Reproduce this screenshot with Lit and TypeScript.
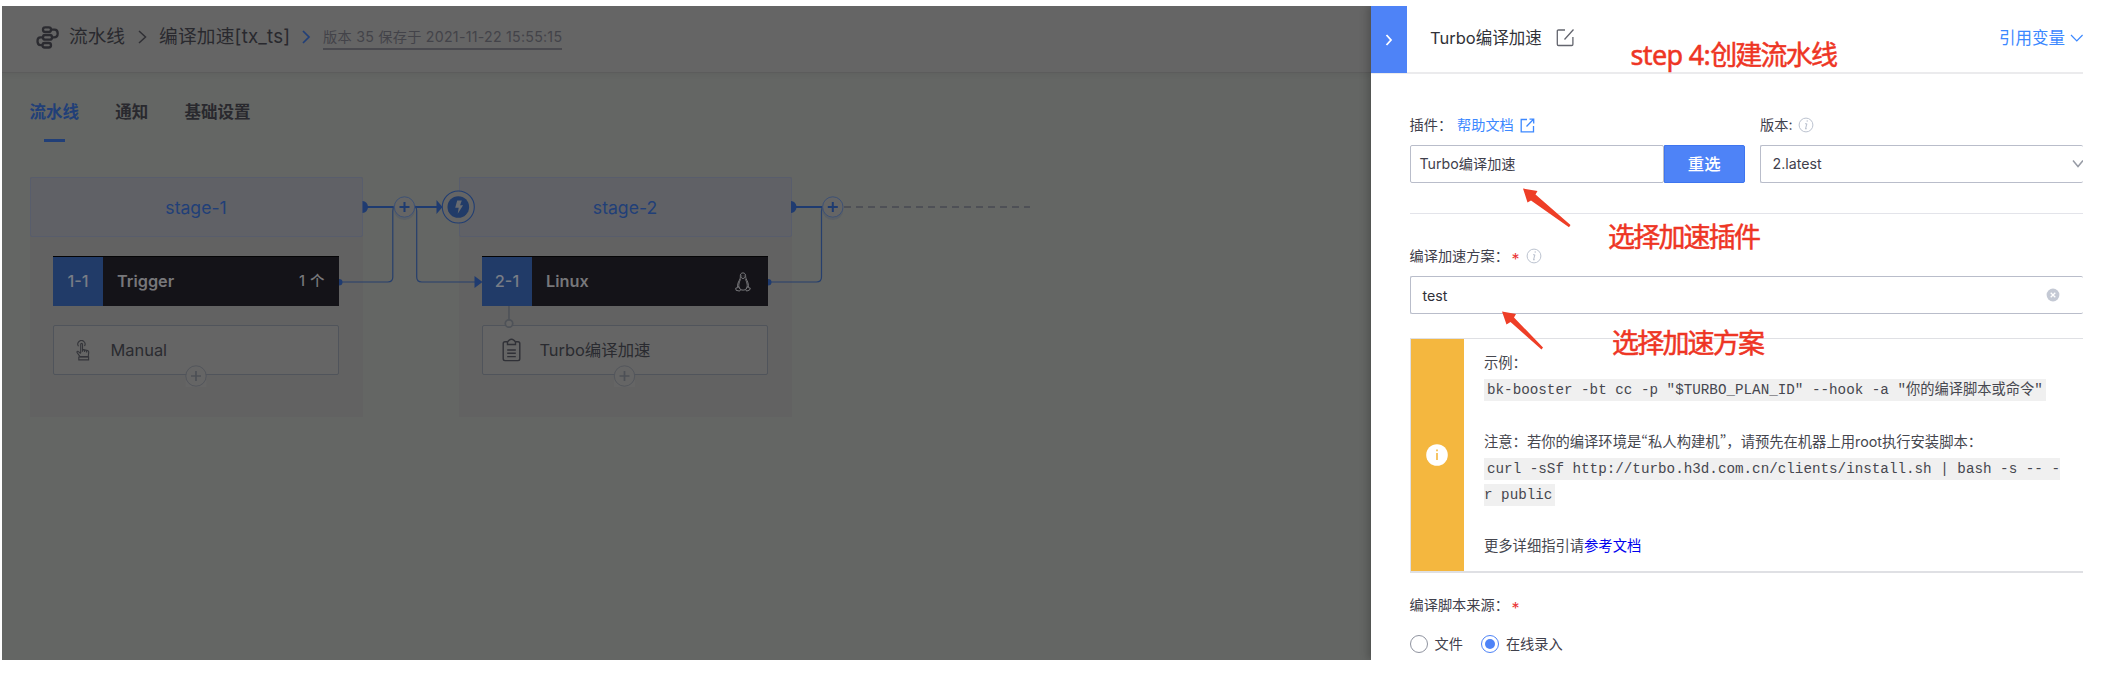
import { LitElement, html, css, svg, nothing } from "lit";
import { customElement, property } from "lit/decorators.js";

const base = css`
  *, *::before, *::after { box-sizing: border-box; }
  :host {
    font-family: Inter, "Noto Sans CJK SC", sans-serif;
    white-space: nowrap;
  }
  svg { display: block; flex: none; }
`;

const infoIcon = html`<svg width="16" height="16" viewBox="0 0 16 16" fill="none" stroke="#bcc3d0">
  <circle cx="8" cy="8" r="6.9" />
  <path d="M8.9 6.6 7.6 11.6M7 6.8h1.8M7 11.8h1.8" stroke-width="1.1" />
  <path d="M8.7 4.1h1" stroke-width="1.5" />
</svg>`;

@customElement("pipeline-stage")
export class PipelineStage extends LitElement {
  @property() name = "";
  @property() code = "";
  @property() job = "";
  @property() atom = "";
  @property() kind = "manual";

  static styles = [
    base,
    css`
      :host { display: block; width: 333px; height: 240px; background: #626262; }
      .head {
        height: 60px; border: 1px solid #585d6c; border-radius: 2px; background: #606166;
        color: #213f78; font-size: 17.6px; line-height: 60px; text-align: center;
      }
      .body { padding: 19px 24px 0 23.5px; }
      .job { display: flex; height: 50px; background: #141318; border-top: 1px solid #050506; line-height: 48px; color: #77777a; font-weight: 600; }
      .code { width: 50px; background: #213b68; text-align: center; font-size: 16.3px; color: #787d86; font-weight: 500; }
      .job-name { flex: 1; padding-left: 14px; font-size: 16.3px; }
      .count { display: flex; gap: 5px; padding-right: 14px; font-size: 14.5px; font-weight: 500; }
      .os { align-self: center; padding-right: 17px; }
      .atom {
        display: flex; align-items: center; height: 50px; margin-top: 19px; border: 1px solid #50545b;
        border-radius: 2px; background: #656565; color: #2a2b30; font-size: 16.4px; line-height: 24px;
      }
      .icon { width: 56.5px; display: flex; justify-content: center; padding-left: 1px; }
      .atom-name { margin-top: -1px; }
    `,
  ];

  render() {
    const manual = this.kind === "manual";
    return html`
      <div class="head">${this.name}</div>
      <div class="body">
        <div class="job">
          <div class="code">${this.code}</div>
          <div class="job-name">${this.job}</div>
          ${manual
            ? html`<div class="count"><span>1</span><span>个</span></div>`
            : html`<div class="os">
                <svg width="16" height="20" viewBox="0 0 16 20" fill="none" stroke="#77777a" stroke-width="1">
                  <path d="M5.3 5C5.1 2 6.2.9 8 .9s2.8 1.3 2.7 4.2c.1 2.2 2.6 4.4 2.8 8.7M5.4 5c.1 2.6-2.8 4.7-2.9 8.9" />
                  <path d="M5.700 7.300c-1.800 3.100-2.700 6.700-1 9.200M10.300 7.300c1.800 3.100 2.700 6.700 1 9.200M5.300 17.700q2.800.9 5.400 0" />
                  <path d="m6 5.400 2 1.300 2-1.300M6.700 3.500v1M9.200 3.500v1" />
                  <path d="m2.800 14-.3 1.700-1.800.4.4 2.200 3.500.8 1-1.600zM13.200 14l.4 1.700 1.700.4-.7 1.900-3 1.100-.9-1.600z" />
                </svg>
              </div>`}
        </div>
        <div class="atom">
          <div class="icon">
            ${manual
              ? html`<svg width="14" height="21" viewBox="0 0 14 21" fill="none" stroke="#34353a" stroke-width="1.1">
                  <path d="M2.5 6.2A3.6 3.6 0 1 1 8.5 6" />
                  <path d="M4.7 13V4.4c0-1.4 1.8-1.4 1.8 0v5l5.1 1.2q1.2.4 1.1 1.6l-.4 4.4H4L1.2 12.7c-.7-1 .5-1.9 1.3-1.1l2.2 2M6.5 9.5v2.2M8.6 10v2M10.6 10.4v2" />
                  <path d="M2.8 17h9.8v2.9H2.8z" />
                </svg>`
              : html`<svg width="19" height="24" viewBox="0 0 19 24" fill="none" stroke="#303137" stroke-width="1.4">
                  <path d="M5.3 3.7H3Q1.2 3.7 1.2 5.5v15.3q0 1.8 1.8 1.8h13q1.8 0 1.8-1.8V5.5q0-1.8-1.8-1.8h-2.3" />
                  <path d="M5.5 4.6C5.5 3.2 6.6 3 7.1 2.2Q9.5.2 11.9 2.2c.5.8 1.6 1 1.6 2.4v1.9h-8zM5.2 12h8.6M5.2 15.3h8.6M5.2 18.6h8.6" />
                </svg>`}
          </div>
          <div class="atom-name">${this.atom}</div>
        </div>
      </div>
    `;
  }
}

@customElement("pipeline-canvas")
export class PipelineCanvas extends LitElement {
  static styles = [
    base,
    css`
      :host { display: block; position: relative; }
      .stages { display: flex; gap: 96px; padding: 0 27.5px; }
      .links { position: absolute; left: 0; top: 0; pointer-events: none; }
    `,
  ];

  private addStage(x: number) {
    return svg`<g>
      <circle cx=${x} cy="32.5" r="9.5" fill="none" stroke="#3a4c6d" stroke-width="2" opacity=".25"/>
      <circle cx=${x} cy="30" r="10.2" fill="#656565" stroke="#3d5175" stroke-width="1"/>
      <path d="M${x - 5} 30h10M${x} 25v10" stroke="#1e3b70" stroke-width="2"/>
    </g>`;
  }

  private addAtom(x: number) {
    return svg`<g>
      <rect x=${x - 10.5} y="199" width="21" height="11" fill="#656565"/>
      <circle cx=${x} cy="199" r="10.2" fill="#656565" stroke="#53565c" stroke-width="1"/>
      <path d="M${x - 5} 199h10M${x} 194v10" stroke="#4d5056" stroke-width="1.7"/>
    </g>`;
  }

  render() {
    return html`
      <div class="stages">
        <pipeline-stage name="stage-1" code="1-1" job="Trigger" atom="Manual" kind="manual"></pipeline-stage>
        <pipeline-stage name="stage-2" code="2-1" job="Linux" atom="Turbo编译加速" kind="task"></pipeline-stage>
      </div>
      <svg class="links" width="1100" height="240" viewBox="2 0 1100 240" fill="none">
        <g stroke="#1e3b70" stroke-width="2">
          <path d="M363 30h30M415 30h22M791 30h31" />
        </g>
        <g stroke="#263f6d" stroke-width="1.2">
          <path d="M394 29q-1.2 2-1.2 5v66q0 5-5 5h-47" />
          <path d="M415 29q1.7 2 1.7 5v66q0 5 5 5h54" />
          <path d="M823 29q-1.5 2-1.5 5v66q0 5-5 5h-47" />
        </g>
        <g fill="#1f3b70">
          <path d="M362.5 24a5.5 6 0 0 1 0 12zM791 24a5.5 6 0 0 1 0 12z" />
          <path d="m436.5 23 6 7-6 7zM474.5 99l8 6-8 6z" />
          <path d="M339 102a3.5 3.2 0 0 1 0 6.4zM768 102a3.5 3.2 0 0 1 0 6.4z" />
        </g>
        <path d="M844 30h186" stroke="#4e5056" stroke-width="2" stroke-dasharray="7 5" />
        <circle cx="458.3" cy="30" r="16" fill="#656565" stroke="#213e73" stroke-width="1.1" />
        <circle cx="458.3" cy="30" r="10.8" fill="#213b68" />
        <path d="M457.2 23.5h4.6l-1.7 4.7h3l-5.4 8.6 1-6.1h-3.5z" fill="#686b70" />
        <path d="M509 129v14" stroke="#4e5258" stroke-width="1.6" />
        <circle cx="509" cy="146.5" r="3.7" fill="#656565" stroke="#4e5258" stroke-width="1.7" />
        ${this.addStage(404.5)}${this.addStage(832.8)}${this.addAtom(196)}${this.addAtom(624.5)}
      </svg>
    `;
  }
}

@customElement("pipeline-page")
export class PipelinePage extends LitElement {
  static styles = [
    base,
    css`
      :host { display: block; background: #646664; color: #29292e; overflow: hidden; }
      .top { display: flex; align-items: center; height: 67px; padding: 0 0 4px 34px; background: #656565; border-bottom: 1px solid #5c5c5c; box-shadow: 0 2px 5px rgba(0,0,0,.05); font-size: 18.7px; line-height: 26px; }
      .crumb { margin-left: 10px; }
      .arrow { margin: 0 12px 0 13px; }
      .pipe { width: 132px; letter-spacing: .2px; }
      .next { margin: 0 12px 0 11px; }
      .version { height: 25px; margin-top: 1px; line-height: 23px; border-bottom: 2px solid #49494e; color: #434349; font-size: 14.2px; letter-spacing: .25px; }
      .tabs { display: flex; gap: 36.3px; height: 104px; padding: 26px 0 0 27.5px; font-size: 16.5px; font-weight: 700; line-height: 26px; }
      .tab { display: flex; flex-direction: column; align-items: center; gap: 14px; }
      .tab.on { color: #213f78; }
      .bar { width: 21px; height: 3px; margin-left: 1px; background: #213f78; }
    `,
  ];

  render() {
    const tabs = ["流水线", "通知", "基础设置"];
    return html`
      <div class="top">
        <svg width="23" height="23" viewBox="0 0 23 23" fill="none" stroke="#2b2b30" stroke-width="2.3">
          <rect x="7" y="1.4" width="8" height="4.5" rx="2.2" />
          <rect x="7" y="9" width="9" height="4.7" rx="2.2" />
          <rect x="6.5" y="17" width="8.5" height="4.5" rx="2.2" />
          <path d="M15 3.6h3.5q3.2 0 3.2 3.8 0 3.9-3.7 3.9h-2M7 11.3H4.5q-3 0-3 4 0 3.8 3 3.8h2" />
        </svg>
        <span class="crumb">流水线</span>
        <svg class="arrow" width="9" height="16" viewBox="0 0 9 16" fill="none" stroke="#303035" stroke-width="1.5"><path d="m1 2 6.5 6L1 14" /></svg>
        <span class="pipe">编译加速[tx_ts]</span>
        <svg class="next" width="9" height="16" viewBox="0 0 9 16" fill="none" stroke="#213f78" stroke-width="1.7"><path d="m1 2 6 6-6 6" /></svg>
        <span class="version">版本 35 保存于 2021-11-22 15:55:15</span>
      </div>
      <div class="tabs">
        ${tabs.map((t, i) => html`<div class="tab ${i === 0 ? "on" : ""}">${t}${i === 0 ? html`<span class="bar"></span>` : nothing}</div>`)}
      </div>
      <pipeline-canvas></pipeline-canvas>
    `;
  }
}

@customElement("atom-panel")
export class AtomPanel extends LitElement {
  static styles = [
    base,
    css`
      :host { display: block; background: #fff; color: #3f404c; font-size: 14.2px; overflow: hidden; }
      .head { display: flex; align-items: center; height: 68px; border-bottom: 2px solid #ebebed; color: #313238; font-size: 16.5px; line-height: 24px; }
      .fold { width: 36px; height: 67px; flex: none; display: grid; place-items: center; align-self: flex-start; background: #4e83f7; }
      .title { margin-left: 23px; margin-top: -2px; width: 113px; }
      .edit { margin: -3px 0 0 13px; }
      .vars { margin: -3px 0 0 auto; display: flex; align-items: center; gap: 5px; color: #3c88ff; }
      .form { padding: 38px 0 0 38.5px; }
      .pair { display: grid; grid-template-columns: 335px 1fr; column-gap: 15.5px; }
      .label { display: flex; align-items: center; height: 28px; padding-bottom: 2px; line-height: 22px; }
      .help { display: flex; align-items: center; gap: 6px; color: #3c88ff; }
      .plugin { width: 47.5px; }
      .ver { width: 38px; }
      .combo { display: flex; height: 38px; margin-top: 5px; line-height: 22px; }
      .field { flex: 1; display: flex; align-items: center; border: 1px solid #b9bdca; border-radius: 2px; }
      .combo .field { padding: 0 0 1px 9px; }
      .combo .btn { width: 80.5px; display: grid; place-items: center; padding-bottom: 1px; border: 1px solid #3e75ef; border-radius: 0 2px 2px 0; background: #4e83f7; color: #fff; font-size: 16.4px; font-weight: 500; }
      .combo .select { padding-left: 11.5px; border-right: 0; justify-content: space-between; }
      .rule { height: 1px; margin-top: 29.5px; background: #e3e4ea; }
      .plan { margin-top: 29.5px; }
      .star { width: 16px; padding: 5px 0 0 1.5px; color: #ea3636; font-size: 16px; line-height: 14px; }
      .long { width: 100.5px; }
      .planfield { height: 38px; margin-top: 5px; border-right: 0; padding: 0 23px 0 12px; justify-content: space-between; color: #2f3038; }
      .note { display: flex; height: 235px; margin-top: 24px; border: 1px solid #dfe0e4; border-right: 0; border-bottom-width: 2px; }
      .side { width: 53px; display: grid; place-items: center; background: #f4b73f; flex: none; }
      .text { padding: 11px 20px 0 20.5px; line-height: 26.15px; flex: 1; font-size: 14.3px; }
      .line { height: 26.15px; color: #46474f; }
      .mono { font-family: "Liberation Mono", "Noto Sans CJK SC", monospace; background: #f0f0f0; padding: 3px 3px; font-size: 14.26px; }
      .first { padding-right: 0; }
      .rest { padding-left: 0; }
      .quote { font-family: "Noto Sans CJK SC", sans-serif; font-feature-settings: "pwid"; }
      .link { color: #0000ee; }
      .source { margin-top: 19px; }
      .radios { display: flex; align-items: center; height: 30px; margin-top: 9px; line-height: 22px; }
      .radio { width: 18.5px; height: 18.5px; border: 1px solid #8f939f; border-radius: 50%; margin-right: 6.5px; display: grid; place-items: center; }
      .radio.on { border: 1.5px solid #4e83f7; margin-left: 18px; }
      .radio.on::after { content: ""; width: 10px; height: 10px; border-radius: 50%; background: #4e83f7; }
      .choice { margin-top: -1px; }
    `,
  ];

  render() {
    return html`
      <div class="head">
        <div class="fold"><svg width="10" height="14" viewBox="0 0 10 14" fill="none" stroke="#fff" stroke-width="1.8"><path d="m2.5 2 4.5 5-4.5 5" /></svg></div>
        <span class="title">Turbo编译加速</span>
        <svg class="edit" width="19" height="19" viewBox="0 0 19 19" fill="none" stroke="#63656e" stroke-width="1.3">
          <path d="M9 2H2.5Q1.3 2 1.3 3.200v13.100q0 1.200 1.200 1.200h13.200q1.200 0 1.200-1.200V9M8.500 11.500 17.500 1.500" />
        </svg>
        <span class="vars">引用变量<svg width="13" height="10" viewBox="0 0 13 10" fill="none" stroke="#3c88ff" stroke-width="1.2"><path d="m1 2 5.800 6L12.600 2" /></svg></span>
      </div>
      <div class="form">
        <div class="pair">
          <div>
            <div class="label">
              <span class="plugin">插件：</span>
              <span class="help">帮助文档<svg width="15" height="15" viewBox="0 0 15 15" fill="none" stroke="#3c88ff" stroke-width="1.3"><path d="M7 1.500H1.200v12.300h12.300V8M6.500 8.500l7-7.300M9.500 1.200h4.200v4.300" /></svg></span>
            </div>
            <div class="combo"><span class="field">Turbo编译加速</span><span class="btn">重选</span></div>
          </div>
          <div>
            <div class="label"><span class="ver">版本:</span>${infoIcon}</div>
            <div class="combo">
              <span class="field select">2.latest<svg width="11" height="9" viewBox="0 0 11 9" fill="none" stroke="#979ba5" stroke-width="1.5"><path d="m1 1.500 5 6 5-6" /></svg></span>
            </div>
          </div>
        </div>
        <div class="rule"></div>
        <div class="label plan"><span class="long">编译加速方案：</span><span class="star">*</span>${infoIcon}</div>
        <div class="field planfield">test<svg width="14" height="14" viewBox="0 0 14 14"><circle cx="7" cy="7" r="6.4" fill="#c4c9d4" /><path d="m4.700 4.700 4.600 4.600m0-4.600L4.700 9.300" stroke="#fff" stroke-width="1.3" /></svg></div>
        <div class="note">
          <div class="side"><svg width="22" height="22" viewBox="0 0 22 22"><circle cx="11" cy="11" r="10.8" fill="#fff" /><path d="M11 9v7M11 5.500v1.800" stroke="#f4b73f" stroke-width="1.6" /></svg></div>
          <div class="text">
            <div class="line">示例：</div>
            <div class="line"><span class="mono">bk-booster -bt cc -p "$TURBO_PLAN_ID" --hook -a "你的编译脚本或命令"</span></div>
            <div class="line"></div>
            <div class="line">注意：若你的编译环境是<span class="quote">“</span>私人构建机<span class="quote">”</span>，请预先在机器上用root执行安装脚本：</div>
            <div class="line"><span class="mono first">curl -sSf http://turbo.h3d.com.cn/clients/install.sh | bash -s -- -</span></div>
            <div class="line"><span class="mono rest">r public</span></div>
            <div class="line"></div>
            <div class="line">更多详细指引请<span class="link">参考文档</span></div>
          </div>
        </div>
        <div class="label source"><span class="long">编译脚本来源：</span><span class="star">*</span></div>
        <div class="radios"><span class="radio"></span><span class="choice">文件</span><span class="radio on"></span><span class="choice">在线录入</span></div>
      </div>
    `;
  }
}

@customElement("app-root")
export class AppRoot extends LitElement {
  static styles = [
    base,
    css`
      :host { display: block; position: relative; height: 674px; padding: 6px 21px 14px 2px; background: #fff; overflow: hidden; }
      .frame { display: grid; grid-template-columns: 1369px 712px; height: 654px; overflow: hidden; }
      pipeline-page, atom-panel { min-width: 0; height: 654px; }
      atom-panel { position: relative; box-shadow: -3px 0 8px rgba(0,0,0,.22); }
      .callout { position: absolute; color: #ee3524; font-family: "Noto Sans CJK SC", sans-serif; font-size: 27px; line-height: 36px; letter-spacing: -1.8px; -webkit-text-stroke: .5px #ee3524; }
      .latin { font-family: "Noto Sans", sans-serif; letter-spacing: -.65px; }
      .c1 { left: 1630.5px; top: 36px; }
      .c2 { left: 1608px; top: 218px; }
      .c3 { left: 1612px; top: 324px; }
      .pointers { position: absolute; left: 1490px; top: 180px; }
    `,
  ];

  render() {
    return html`
      <div class="frame">
        <pipeline-page></pipeline-page>
        <atom-panel></atom-panel>
      </div>
      <svg class="pointers" width="90" height="180" viewBox="1490 180 90 180" fill="#ee3e27">
        <path d="M1523 188.500l14.500 2.500-2 3.500L1570.500 225l-1.500 2.200L1531 200.500l-3.500 2z" />
        <path d="M1502 311.500l14 2.500-2 3.500L1543 347.500l-1.500 2L1510.500 322l-4 2.500z" />
      </svg>
      <span class="callout c1"><span class="latin">step 4:</span>创建流水线</span>
      <span class="callout c2">选择加速插件</span>
      <span class="callout c3">选择加速方案</span>
    `;
  }
}
